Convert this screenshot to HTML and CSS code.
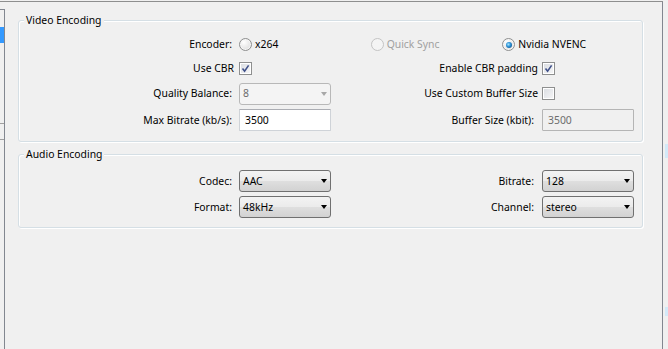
FILE: index.html
```html
<!DOCTYPE html>
<html lang="en">
<head>
    <meta charset="UTF-8">
    <title>Output Settings</title>
    <link rel="stylesheet" href="styles.css">
</head>
<body>

    <div class="frame">
        <!-- list widget peeking in on the left -->
        <div class="side">
            <div class="list">
                <div class="list-sel"></div>
                <div class="list-rule"></div>
            </div>
        </div>

        <div class="pane">
            <!-- Video Encoding -->
            <fieldset class="group">
                <legend>Video Encoding</legend>
                <div class="form video-form">
                    <span class="lbl">Encoder:</span>
                    <div class="radios">
                        <span class="radio-opt"><span class="radio"></span>x264</span>
                        <span class="radio-opt disabled"><span class="radio"></span>Quick Sync</span>
                        <span class="radio-opt"><span class="radio checked"></span>Nvidia NVENC</span>
                    </div>

                    <span class="lbl chk-lbl">Use CBR</span>
                    <span class="check checked"><svg viewBox="0 0 11 11" width="11" height="11"><path d="M2.5 5.5 L4.6 8.2 L8.6 2.4" /></svg></span>
                    <span class="lbl lbl-r chk-lbl">Enable CBR padding</span>
                    <span class="check checked"><svg viewBox="0 0 11 11" width="11" height="11"><path d="M2.5 5.5 L4.6 8.2 L8.6 2.4" /></svg></span>

                    <span class="lbl">Quality Balance:</span>
                    <div class="combo disabled">8</div>
                    <span class="lbl lbl-r chk-lbl">Use Custom Buffer Size</span>
                    <span class="check"></span>

                    <span class="lbl">Max Bitrate (kb/s):</span>
                    <div class="edit">3500</div>
                    <span class="lbl lbl-r">Buffer Size (kbit):</span>
                    <div class="edit disabled">3500</div>
                </div>
            </fieldset>

            <!-- Audio Encoding -->
            <fieldset class="group audio">
                <legend>Audio Encoding</legend>
                <div class="form audio-form">
                    <span class="lbl">Codec:</span>
                    <div class="combo">AAC</div>
                    <span class="lbl lbl-r">Bitrate:</span>
                    <div class="combo">128</div>

                    <span class="lbl">Format:</span>
                    <div class="combo">48kHz</div>
                    <span class="lbl lbl-r">Channel:</span>
                    <div class="combo">stereo</div>
                </div>
            </fieldset>
        </div>
    </div>

    <div class="edge">
        <div class="edge-mark"></div>
        <div class="edge-mark low"></div>
    </div>

</body>
</html>
```

FILE: styles.css
```css
* {
    margin: 0;
    padding: 0;
    box-sizing: border-box;
}

body {
    font-family: "Segoe UI", "Noto Sans", sans-serif;
    font-size: 10.4px;
    line-height: 13px;
    color: #000;
    background-color: #f0f0f0;
    display: flex;
    height: 349px;
    overflow: hidden;
}

/* outer frame */
.frame {
    display: flex;
    width: 663px;
    height: 348px;
    margin-top: 1px;
    border-top: 1px solid #8e8f8f;
}

.side {
    width: 5px;
    padding-top: 7px;
    display: flex;
}

.list {
    flex: 1;
    border-top: 1px solid #828790;
    border-right: 1px solid #828790;
}

.list-sel {
    margin-top: 17px;
    height: 16px;
    background-color: #3399ff;
}

.list-rule {
    margin-top: 80px;
    height: 17px;
    border-top: 1px solid #a0a0a0;
    border-bottom: 1px solid #a0a0a0;
}

.pane {
    width: 658px;
    border-right: 1px solid #828790;
    padding: 12px 0 0 13px;
}

.edge {
    width: 5px;
}

.edge-mark {
    margin: 144px 0 0 2px;
    width: 3px;
    height: 14px;
    background-color: #d3e9f8;
}

.edge-mark.low {
    margin-top: 149px;
    height: 9px;
}

/* group boxes */
.group {
    width: 625px;
    border: 1px solid #d5dfe5;
    border-radius: 3px;
    box-shadow: 1px 1px 0 #fff, inset 1px 1px 0 #fff;
    padding: 6px 0 8px;
}

.group legend {
    margin-left: 5px;
    padding: 0 2px;
    height: 13px;
    line-height: 13px;
    background-color: #f0f0f0;
}

.group.audio {
    margin-top: 6px;
    padding: 7px 0 7px;
}

/* form grid */
.form {
    display: grid;
    grid-template-columns: 220px 92px 211px 92px;
    align-items: center;
}

.video-form {
    grid-template-rows: 23px 24px 27px 26px;
}

.audio-form {
    grid-template-rows: 26px 26px;
}

.lbl {
    text-align: right;
    padding-right: 7px;
    white-space: nowrap;
}

.lbl-r {
    padding-right: 8px;
}

.chk-lbl {
    padding-right: 5px;
}

.lbl-r.chk-lbl {
    padding-right: 4px;
}

/* radio buttons */
.radios {
    grid-column: 2 / 5;
    display: grid;
    grid-template-columns: repeat(3, 1fr);
}

.radio-opt {
    display: flex;
    align-items: center;
    gap: 3px;
}

.radio-opt.disabled {
    color: #a0a0a0;
}

.radio {
    width: 13px;
    height: 13px;
    border-radius: 50%;
    border: 1px solid #8e8f8f;
    background: radial-gradient(circle at 35% 30%, #ffffff, #e6e6e6 60%, #cfcfcf);
    box-shadow: inset 0 0 0 1px #f6f6f6;
    display: flex;
    align-items: center;
    justify-content: center;
}

.radio.checked::after {
    content: "";
    width: 6px;
    height: 6px;
    border-radius: 50%;
    background: radial-gradient(circle at 40% 40%, #a4e6ff, #2a8ed3 45%, #0c3d70);
}

.disabled .radio {
    border-color: #c4c4c4;
    background: #f4f4f4;
    box-shadow: none;
}

/* check boxes */
.check {
    width: 13px;
    height: 13px;
    border: 1px solid #8e8f8f;
    background: linear-gradient(135deg, #d9dce1, #f7f7f8);
    box-shadow: inset 0 0 0 1px #fff;
}

.check svg {
    display: block;
}

.check path {
    fill: none;
    stroke: #3f5089;
    stroke-width: 1.6;
}

/* combo boxes */
.combo {
    height: 22px;
    border: 1px solid #707070;
    border-radius: 3px;
    background: linear-gradient(#f3f3f3, #ebebeb 50%, #dfdfdf 50%, #d2d2d2);
    display: flex;
    align-items: center;
    justify-content: space-between;
    padding: 0 3px 0 3px;
}

.combo::after {
    content: "";
    border-left: 3.5px solid transparent;
    border-right: 3.5px solid transparent;
    border-top: 4px solid #000;
}

.combo.disabled {
    border-color: #b8b8b8;
    background: #f4f4f4;
    color: #6d6d6d;
}

.combo.disabled::after {
    border-top-color: #a8a8a8;
}

/* line edits */
.edit {
    height: 22px;
    border: 1px solid #cfd3d8;
    border-top-color: #abadb3;
    border-radius: 1px;
    background-color: #fff;
    display: flex;
    align-items: center;
    padding: 0 5px;
}

.edit.disabled {
    border-color: #b5b5b5;
    background-color: #f0f0f0;
    color: #6d6d6d;
}
```
